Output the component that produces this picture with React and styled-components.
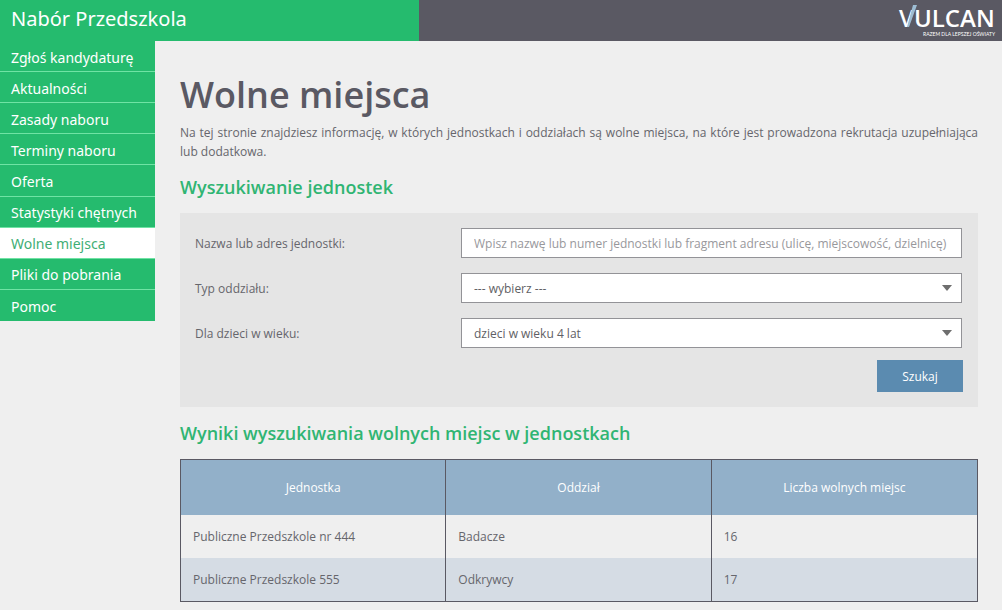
import React, { useState } from "react";
import styled, { createGlobalStyle } from "styled-components";

const GlobalStyle = createGlobalStyle`
  * {
    box-sizing: border-box;
  }

  body {
    margin: 0;
    background: #efefef;
    color: #66666c;
    font-family: "Open Sans", "Noto Sans", sans-serif;
    font-size: 12px;
    line-height: 19px;
  }
`;

const Header = styled.header`
  display: flex;
  height: 41px;
  background: #5a5963;
`;

const SiteTitle = styled.div`
  flex: 0 0 419px;
  padding-left: 11px;
  background: #25bb6e;
  color: #fff;
  font-family: "Noto Sans", sans-serif;
  font-size: 20px;
  line-height: 38px;
`;

const LogoLink = styled.a`
  margin-left: auto;
  padding-right: 4px;
  height: 41px;
`;

const Layout = styled.div`
  display: flex;
  align-items: flex-start;
`;

const Menu = styled.nav`
  flex: 0 0 155px;
  display: grid;
  grid-auto-rows: 1fr;
  height: 280px;
  background: #25bb6e;
`;

const MenuLink = styled.a`
  display: flex;
  align-items: center;
  padding: 2px 0 0 11px;
  border-bottom: 1px solid #6fe3a4;
  background: ${props => (props.$active ? "#fff" : "transparent")};
  color: ${props => (props.$active ? "#3fae75" : "#fff")};
  font-family: "Noto Sans", sans-serif;
  font-size: 14px;
  text-decoration: none;

  &:last-child {
    border-bottom: 0;
  }
`;

const Content = styled.main`
  flex: 1;
  min-width: 0;
  padding: 26px 24px 8px 25px;
`;

const PageTitle = styled.h1`
  margin: 0;
  color: #5a5963;
  font-size: 36px;
  font-weight: 600;
  line-height: 56px;
`;

const Lead = styled.p`
  margin: 0;
  text-align: justify;
`;

const SectionTitle = styled.h2`
  margin: 12px 0;
  color: #30b573;
  font-size: 18px;
  font-weight: 600;
  line-height: 28px;
`;

const SearchForm = styled.form`
  display: flex;
  flex-direction: column;
  padding: 15px;
  background: #e5e5e5;
`;

const Field = styled.div`
  display: grid;
  grid-template-columns: 1fr 501px;
  align-items: center;
  margin-bottom: 15px;
  padding-right: 1px;

  &:nth-last-child(2) {
    margin-bottom: 12px;
  }
`;

const TextBox = styled.input`
  width: 100%;
  height: 30px;
  padding: 0 12px;
  border: 1px solid #939397;
  background: #fff;
  color: #66666c;
  font: inherit;

  &::placeholder {
    color: #98989c;
    opacity: 1;
  }
`;

const SelectWrap = styled.div`
  display: grid;
  align-items: center;

  > * {
    grid-area: 1 / 1;
  }
`;

const Select = styled.select`
  appearance: none;
  width: 100%;
  height: 30px;
  padding: 0 12px;
  border: 1px solid #939397;
  border-radius: 0;
  background: #fff;
  color: #5f5f65;
  font: inherit;
`;

const Arrow = styled.svg`
  justify-self: end;
  margin-right: 10px;
  pointer-events: none;
`;

const SearchButton = styled.button`
  align-self: flex-end;
  width: 86px;
  height: 32px;
  border: 0;
  background: #5b8bb0;
  color: #fff;
  font: inherit;
`;

const Results = styled.table`
  width: 100%;
  table-layout: fixed;
  border-collapse: separate;
  border-spacing: 0;
  border: 1px solid #5a5963;

  th,
  td {
    border-right: 1px solid #5a5963;
    padding: 0 12px;
  }

  th:last-child,
  td:last-child {
    border-right: 0;
  }

  th {
    height: 55px;
    background: #92b0c9;
    color: #fff;
    font-weight: 400;
  }

  td {
    height: 43px;
  }

  tbody tr:nth-child(even) {
    background: #d5dce4;
  }
`;

const menu = [
  "Zgłoś kandydaturę",
  "Aktualności",
  "Zasady naboru",
  "Terminy naboru",
  "Oferta",
  "Statystyki chętnych",
  "Wolne miejsca",
  "Pliki do pobrania",
  "Pomoc"
];

const results = [
  { unit: "Publiczne Przedszkole nr 444", group: "Badacze", places: 16 },
  { unit: "Publiczne Przedszkole 555", group: "Odkrywcy", places: 17 }
];

function Logo() {
  return (
    <svg width="100" height="41" viewBox="0 0 100 41" fill="#fff">
      <g fontFamily="Open Sans" fontSize="24" fontWeight="600">
        <text x="1" y="27">V</text>
        <text x="16" y="27">ULCAN</text>
      </g>
      <path d="M15 5h4l-8 22H9z" fill="#9dbdd3" />
      <text x="25" y="36" fontFamily="Lato" fontSize="5">RAZEM DLA LEPSZEJ OŚWIATY</text>
    </svg>
  );
}

function Dropdown({ id, options }) {
  return (
    <SelectWrap>
      <Select id={id}>
        {options.map(option => (
          <option key={option}>{option}</option>
        ))}
      </Select>
      <Arrow width="10" height="6" viewBox="0 0 10 6">
        <path d="M0 0h10L5 6z" fill="#6e6e6e" />
      </Arrow>
    </SelectWrap>
  );
}

function App() {
  const [query, setQuery] = useState("");

  return (
    <>
      <GlobalStyle />
      <Header>
        <SiteTitle>Nabór Przedszkola</SiteTitle>
        <LogoLink href="#" aria-label="Vulcan">
          <Logo />
        </LogoLink>
      </Header>
      <Layout>
        <Menu>
          {menu.map(item => (
            <MenuLink key={item} href="#" $active={item === "Wolne miejsca"}>
              {item}
            </MenuLink>
          ))}
        </Menu>
        <Content>
          <PageTitle>Wolne miejsca</PageTitle>
          <Lead>
            Na tej stronie znajdziesz informację, w których jednostkach i oddziałach są wolne
            miejsca, na które jest prowadzona rekrutacja uzupełniająca lub dodatkowa.
          </Lead>
          <SectionTitle>Wyszukiwanie jednostek</SectionTitle>
          <SearchForm onSubmit={e => e.preventDefault()}>
            <Field>
              <label htmlFor="query">Nazwa lub adres jednostki:</label>
              <TextBox
                id="query"
                value={query}
                onChange={e => setQuery(e.target.value)}
                placeholder="Wpisz nazwę lub numer jednostki lub fragment adresu (ulicę, miejscowość, dzielnicę)"
              />
            </Field>
            <Field>
              <label htmlFor="group">Typ oddziału:</label>
              <Dropdown id="group" options={["--- wybierz ---"]} />
            </Field>
            <Field>
              <label htmlFor="age">Dla dzieci w wieku:</label>
              <Dropdown id="age" options={["dzieci w wieku 4 lat"]} />
            </Field>
            <SearchButton type="submit">Szukaj</SearchButton>
          </SearchForm>
          <SectionTitle>Wyniki wyszukiwania wolnych miejsc w jednostkach</SectionTitle>
          <Results>
            <thead>
              <tr>
                <th>Jednostka</th>
                <th>Oddział</th>
                <th>Liczba wolnych miejsc</th>
              </tr>
            </thead>
            <tbody>
              {results.map(row => (
                <tr key={row.unit}>
                  <td>{row.unit}</td>
                  <td>{row.group}</td>
                  <td>{row.places}</td>
                </tr>
              ))}
            </tbody>
          </Results>
        </Content>
      </Layout>
    </>
  );
}

export default App;
